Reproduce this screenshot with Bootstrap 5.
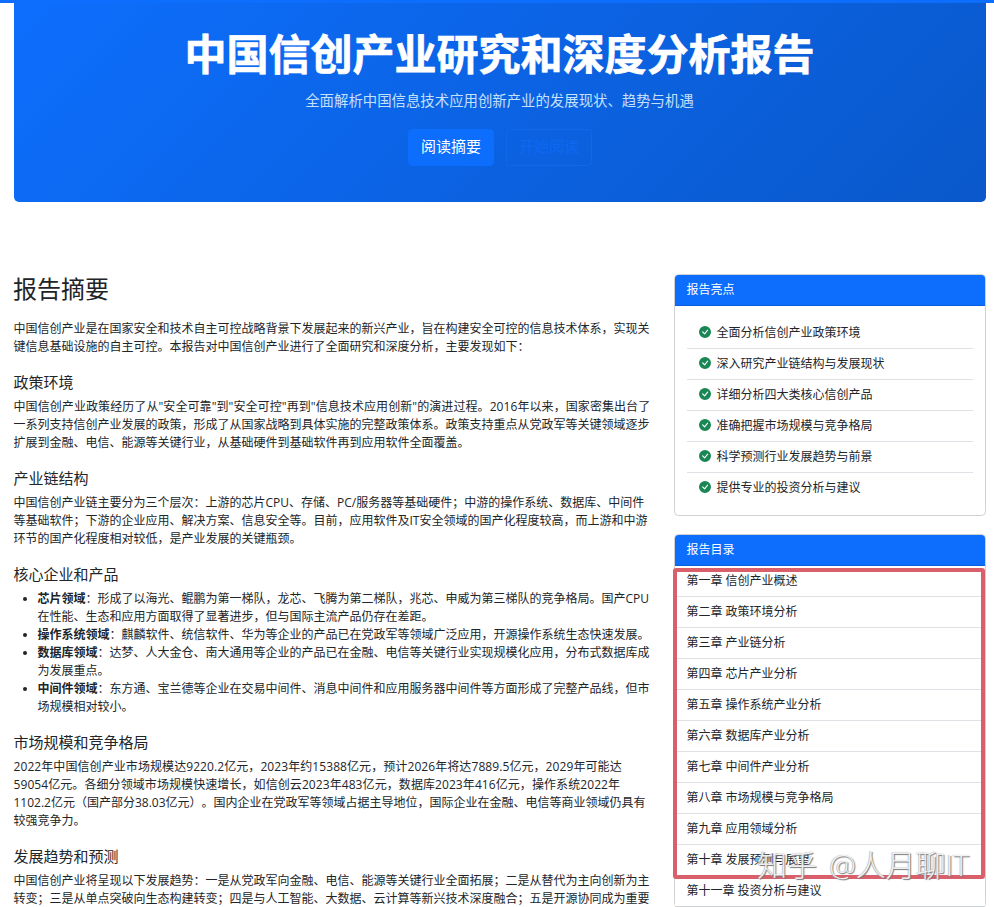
<!DOCTYPE html>
<html lang="zh-CN">
<head>
<meta charset="utf-8">
<meta name="viewport" content="width=device-width, initial-scale=1">
<title>中国信创产业研究和深度分析报告</title>
<link href="https://cdn.jsdelivr.net/npm/bootstrap@5.3.0/dist/css/bootstrap.min.css" rel="stylesheet">
<style>
html{font-size:12px;overflow:hidden}
body{font-family:"Open Sans","Noto Sans CJK SC",sans-serif;height:907px;overflow:hidden;text-spacing-trim:space-all;color:#212529}
.top-strip{height:3px}
.page-wrap{width:990px;margin-left:5px;padding:0 9px}
.hero{height:199px;padding-top:26px;background:linear-gradient(135deg,#0d6efd 0%,#0a58ca 100%);border-radius:0 0 5px 5px;margin-bottom:72px}
.hero h1{font-size:42px;font-weight:700;line-height:50px;margin-bottom:11px;-webkit-text-stroke:.7px #fff;margin-left:-1px}
.hero-sub{font-size:14.4px;line-height:22px;color:#c5e0fb;margin-bottom:17px;margin-left:-1px}
.hero .btn{width:86px;height:37px;padding:0;font-size:15px;line-height:33px}
.btn-faint{color:#0d6af0;border-color:#0f69ea}
.summary{white-space:nowrap}
.summary h2{font-size:24px;font-weight:400;line-height:29px;margin:0 0 17px -1px}
.summary h5{font-size:15px;font-weight:400;line-height:18px;margin:17px 0 7px -.5px}
.summary p,.summary ul{margin-bottom:0;margin-left:-.5px}
.summary ul{padding-left:24px}
.loose{letter-spacing:.08px}
.card-header{border-bottom-color:#0b5ed7;padding-left:11.5px}
.card{--bs-card-border-color:#cfd2d5}
.list-group-item{color:#212529;white-space:nowrap;padding:6px 11.5px}
.tick{width:12px;height:12px;margin-right:6px;vertical-align:-1px}
.red-frame{position:absolute;left:-2px;top:33px;width:312px;height:311px;border:4px solid #d95f6b;border-radius:3px;z-index:2}
.watermark{position:absolute;right:16px;top:312px;font-size:30px;font-weight:300;line-height:36px;word-spacing:4px;color:rgba(255,255,255,.85);text-shadow:1px 1px 1px #777,-.5px -.5px 1px #aaa;z-index:3;white-space:nowrap}
</style>
<script src="https://cdn.jsdelivr.net/npm/bootstrap@5.3.0/dist/js/bootstrap.bundle.min.js"></script>
</head>
<body>
<svg class="d-none"><symbol id="check" viewBox="0 0 16 16"><path fill="#198754" d="M16 8A8 8 0 1 1 0 8a8 8 0 0 1 16 0zm-3.97-3.03a.75.75 0 0 0-1.08.022L7.477 9.417 5.384 7.323a.75.75 0 0 0-1.06 1.06L6.97 11.03a.75.75 0 0 0 1.079-.02l3.992-4.99a.75.75 0 0 0-.01-1.05z"/></symbol></svg>
<div class="top-strip bg-primary"></div>
<div class="page-wrap">
  <header class="hero text-center text-white">
    <h1>中国信创产业研究和深度分析报告</h1>
    <p class="hero-sub">全面解析中国信息技术应用创新产业的发展现状、趋势与机遇</p>
    <div class="d-flex justify-content-center gap-3">
      <a class="btn btn-primary">阅读摘要</a>
      <a class="btn btn-faint">开始阅读</a>
    </div>
  </header>
  <div class="row">
    <main class="col-8 summary">
      <h2>报告摘要</h2>
      <p>中国信创产业是在国家安全和技术自主可控战略背景下发展起来的新兴产业，旨在构建安全可控的信息技术体系，实现关<br>键信息基础设施的自主可控。本报告对中国信创产业进行了全面研究和深度分析，主要发现如下：</p>
      <h5>政策环境</h5>
      <p><span class="loose">中国信创产业政策经历了从"安全可靠"到"安全可控"再到"信息技术应用创新"的演进过程。2016年以来，国家密集出台了</span><br>一系列支持信创产业发展的政策，形成了从国家战略到具体实施的完整政策体系。政策支持重点从党政军等关键领域逐步<br>扩展到金融、电信、能源等关键行业，从基础硬件到基础软件再到应用软件全面覆盖。</p>
      <h5>产业链结构</h5>
      <p>中国信创产业链主要分为三个层次：上游的芯片CPU、存储、PC/服务器等基础硬件；中游的操作系统、数据库、中间件<br>等基础软件；下游的企业应用、解决方案、信息安全等。目前，应用软件及IT安全领域的国产化程度较高，而上游和中游<br>环节的国产化程度相对较低，是产业发展的关键瓶颈。</p>
      <h5>核心企业和产品</h5>
      <ul>
        <li><strong>芯片领域</strong>：形成了以海光、鲲鹏为第一梯队，龙芯、飞腾为第二梯队，兆芯、申威为第三梯队的竞争格局。国产CPU<br>在性能、生态和应用方面取得了显著进步，但与国际主流产品仍存在差距。</li>
        <li><strong>操作系统领域</strong>：麒麟软件、统信软件、华为等企业的产品已在党政军等领域广泛应用，开源操作系统生态快速发展。</li>
        <li><strong>数据库领域</strong>：达梦、人大金仓、南大通用等企业的产品已在金融、电信等关键行业实现规模化应用，分布式数据库成<br>为发展重点。</li>
        <li><strong>中间件领域</strong>：东方通、宝兰德等企业在交易中间件、消息中间件和应用服务器中间件等方面形成了完整产品线，但市<br>场规模相对较小。</li>
      </ul>
      <h5>市场规模和竞争格局</h5>
      <p><span class="loose">2022年中国信创产业市场规模达9220.2亿元，2023年约15388亿元，预计2026年将达7889.5亿元，2029年可能达<br>59054亿元。各细分领域市场规模快速增长，如信创云2023年483亿元，数据库2023年416亿元，操作系统2022年</span><br>1102.2亿元（国产部分38.03亿元）。国内企业在党政军等领域占据主导地位，国际企业在金融、电信等商业领域仍具有<br>较强竞争力。</p>
      <h5>发展趋势和预测</h5>
      <p>中国信创产业将呈现以下发展趋势：一是从党政军向金融、电信、能源等关键行业全面拓展；二是从替代为主向创新为主<br>转变；三是从单点突破向生态构建转变；四是与人工智能、大数据、云计算等新兴技术深度融合；五是开源协同成为重要</p>
    </main>
    <aside class="col-4">
      <div class="card mb-4">
        <div class="card-header text-bg-primary">报告亮点</div>
        <div class="card-body">
          <ul class="list-group list-group-flush">
            <li class="list-group-item"><svg class="tick"><use href="#check"/></svg>全面分析信创产业政策环境</li>
            <li class="list-group-item"><svg class="tick"><use href="#check"/></svg>深入研究产业链结构与发展现状</li>
            <li class="list-group-item"><svg class="tick"><use href="#check"/></svg>详细分析四大类核心信创产品</li>
            <li class="list-group-item"><svg class="tick"><use href="#check"/></svg>准确把握市场规模与竞争格局</li>
            <li class="list-group-item"><svg class="tick"><use href="#check"/></svg>科学预测行业发展趋势与前景</li>
            <li class="list-group-item"><svg class="tick"><use href="#check"/></svg>提供专业的投资分析与建议</li>
          </ul>
        </div>
      </div>
      <div class="card">
        <div class="card-header text-bg-primary">报告目录</div>
        <div class="list-group list-group-flush">
          <a class="list-group-item">第一章 信创产业概述</a>
          <a class="list-group-item">第二章 政策环境分析</a>
          <a class="list-group-item">第三章 产业链分析</a>
          <a class="list-group-item">第四章 芯片产业分析</a>
          <a class="list-group-item">第五章 操作系统产业分析</a>
          <a class="list-group-item">第六章 数据库产业分析</a>
          <a class="list-group-item">第七章 中间件产业分析</a>
          <a class="list-group-item">第八章 市场规模与竞争格局</a>
          <a class="list-group-item">第九章 应用领域分析</a>
          <a class="list-group-item">第十章 发展预测与展望</a>
          <a class="list-group-item">第十一章 投资分析与建议</a>
        </div>
        <div class="red-frame"></div>
        <div class="watermark">知乎 @人月聊IT</div>
      </div>
    </aside>
  </div>
</div>
</body>
</html>
